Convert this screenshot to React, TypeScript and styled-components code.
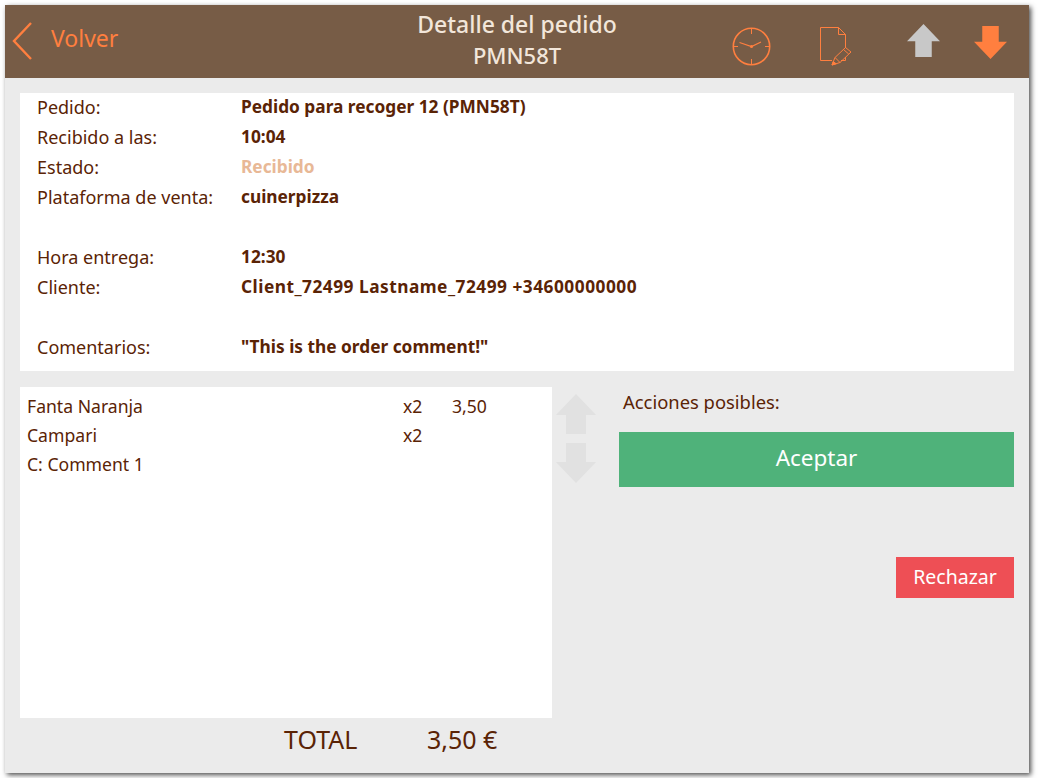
import * as React from 'react';
import styled, {createGlobalStyle} from 'styled-components';

const GlobalStyle = createGlobalStyle`
  html, body {
    margin: 0;
    padding: 0;
    background: #fff;
  }
  body {
    font-family: "Noto Sans", "Open Sans", sans-serif;
    color: #5a2305;
  }
`;

const Frame = styled.div`
  width: 1024px;
  height: 768px;
  margin: 5px;
  background: #ebebeb;
  box-shadow: 2px 2px 5px rgba(0, 0, 0, 0.7);
  display: flex;
  flex-direction: column;
`;

const Header = styled.header`
  height: 73px;
  flex: none;
  background: #775c46;
  display: grid;
  grid-template-columns: 312px 400px 312px;
  align-items: start;
`;

const BackLink = styled.div`
  display: flex;
  align-items: flex-start;
  padding: 17px 0 0 7px;
  gap: 19px;
  color: #ff7f3f;
  font-size: 23px;
  line-height: 32px;
`;

const Title = styled.div`
  padding-top: 4px;
  text-align: center;
  color: #f2e6da;
  font-size: 23px;
  font-weight: 500;
  line-height: 31px;
`;

const TitleCode = styled.div`
  font-size: 22px;
`;

const HeaderIcons = styled.div`
  display: flex;
  align-items: flex-start;
`;

const IconSlot = styled.div<{$w: number; $top: number}>`
  width: ${p => p.$w}px;
  padding-top: ${p => p.$top}px;
  display: flex;
  justify-content: center;
`;

const Content = styled.main`
  padding: 15px 15px 0;
  display: flex;
  flex-direction: column;
  gap: 16px;
`;

const InfoCard = styled.section`
  background: #fff;
  padding: 0 17px 8px;
`;

const InfoRow = styled.div`
  height: 27px;
  margin-bottom: 3px;
  display: grid;
  grid-template-columns: 204px 1fr;
  align-items: center;
  font-size: 18px;
`;

const InfoValue = styled.span<{$muted?: boolean; $wide?: boolean}>`
  font-size: 17.3px;
  font-weight: 700;
  letter-spacing: ${p => (p.$wide ? '0.5px' : '0')};
  color: ${p => (p.$muted ? '#e8b896' : '#5a2305')};
`;

const Columns = styled.div`
  display: grid;
  grid-template-columns: 532px 67px 395px;
`;

const LinesPanel = styled.div`
  height: 331px;
  background: #fff;
  padding: 4px 7px;
  box-sizing: border-box;
`;

const LineRow = styled.div`
  height: 29px;
  display: grid;
  grid-template-columns: 376px 49px 1fr;
  align-items: center;
  font-size: 17.6px;
`;

const Scroller = styled.div`
  padding: 7px 0 0 4px;
  display: flex;
  flex-direction: column;
  gap: 9px;
`;

const Actions = styled.div`
  display: flex;
  flex-direction: column;
`;

const ActionsLabel = styled.div`
  height: 29px;
  margin-bottom: 16px;
  padding-left: 4px;
  display: flex;
  align-items: center;
  font-size: 18.4px;
`;

const AcceptButton = styled.button`
  height: 55px;
  padding: 0 0 5px;
  border: 0;
  background: #4fb27a;
  color: #fff;
  font-family: inherit;
  font-size: 22.5px;
`;

const RejectButton = styled.button`
  align-self: flex-end;
  width: 118px;
  height: 41px;
  margin-top: 70px;
  padding: 0 0 3px;
  border: 0;
  background: #ee4f55;
  color: #fff;
  font-family: inherit;
  font-size: 19.5px;
`;

const TotalRow = styled.div`
  width: 532px;
  height: 41px;
  margin-top: -16px;
  display: grid;
  grid-template-columns: 264px 143px 1fr;
  align-items: center;
  font-size: 25px;
  div:first-child {
    grid-column: 2;
  }
`;

const ArrowUp = ({fill, size}: {fill: string; size: number}) => (
  <svg width={size} height={size} viewBox="0 0 40 40">
    <path d="M20 0 L40 21 H30 V40 H10 V21 H0 Z" fill={fill} />
  </svg>
);

const ArrowDown = ({fill, size}: {fill: string; size: number}) => (
  <svg width={size} height={size} viewBox="0 0 40 40">
    <path d="M20 40 L40 19 H30 V0 H10 V19 H0 Z" fill={fill} />
  </svg>
);

const Chevron = () => (
  <svg width="20" height="38" viewBox="0 0 20 38">
    <path d="M19 1 L2 19 L19 37" fill="none" stroke="#ff7f3f" strokeWidth="2.4" />
  </svg>
);

const ClockIcon = () => (
  <svg width="39" height="39" viewBox="0 0 39 39" fill="none" stroke="#ff7f3f">
    <circle cx="19.500" cy="19.500" r="18.200" strokeWidth="1.600" />
    <path d="M19.500 2v5M19.500 32v5M2 19.500h4M33 19.500h4" strokeWidth="1" />
    <path d="M7.500 15.500 L19.500 19.500 L29 15" strokeWidth="1.200" />
    <circle cx="19.500" cy="19.500" r="1.500" fill="#ff7f3f" stroke="none" />
  </svg>
);

const NoteIcon = () => (
  <svg width="32" height="39" viewBox="0 0 32 39" fill="none" stroke="#ff7f3f" strokeWidth="1">
    <path d="M25.500 21 V7.500 L18.500 0.500 H0.500 V33.500 H12" />
    <path d="M18.500 0.500 V7.500 H25.500" />
    <path d="M21 33.500 H25.500 V30" />
    <path d="M12 38 L15 30.500 L25.500 20.500 L31 25 L20 35.500 Z" />
    <path d="M15 30.500 L20 35.500 M23.500 22.500 L28.700 27" />
    <path d="M12 38 L13.200 34.500 L16.200 36.800 Z" fill="#ff7f3f" />
  </svg>
);

const infoRows: {label: string; value: string; muted?: boolean; wide?: boolean}[] = [
  {label: 'Pedido:', value: 'Pedido para recoger 12 (PMN58T)'},
  {label: 'Recibido a las:', value: '10:04'},
  {label: 'Estado:', value: 'Recibido', muted: true},
  {label: 'Plataforma de venta:', value: 'cuinerpizza'},
  {label: '', value: ''},
  {label: 'Hora entrega:', value: '12:30'},
  {label: 'Cliente:', value: 'Client_72499 Lastname_72499 +34600000000', wide: true},
  {label: '', value: ''},
  {label: 'Comentarios:', value: '"This is the order comment!"'},
];

const lines = [
  ['Fanta Naranja', 'x2', '3,50'],
  ['Campari', 'x2', ''],
  ['C: Comment 1', '', ''],
];

export default function App() {
  return (
    <>
      <GlobalStyle />
      <Frame>
        <Header>
          <BackLink>
            <Chevron />
            Volver
          </BackLink>
          <Title>
            Detalle del pedido
            <TitleCode>PMN58T</TitleCode>
          </Title>
          <HeaderIcons>
            <IconSlot $w={68} $top={22}><ClockIcon /></IconSlot>
            <IconSlot $w={101} $top={22}><NoteIcon /></IconSlot>
            <IconSlot $w={75} $top={19}><ArrowUp fill="#c8c8c8" size={33} /></IconSlot>
            <IconSlot $w={58} $top={21}><ArrowDown fill="#ff7f3f" size={33} /></IconSlot>
          </HeaderIcons>
        </Header>
        <Content>
          <InfoCard>
            {infoRows.map((row, i) => (
              <InfoRow key={i}>
                <span>{row.label}</span>
                <InfoValue $muted={row.muted} $wide={row.wide}>{row.value}</InfoValue>
              </InfoRow>
            ))}
          </InfoCard>
          <Columns>
            <LinesPanel>
              {lines.map(([name, qty, price]) => (
                <LineRow key={name}>
                  <span>{name}</span>
                  <span>{qty}</span>
                  <span>{price}</span>
                </LineRow>
              ))}
            </LinesPanel>
            <Scroller>
              <ArrowUp fill="#e1e1e1" size={40} />
              <ArrowDown fill="#e1e1e1" size={40} />
            </Scroller>
            <Actions>
              <ActionsLabel>Acciones posibles:</ActionsLabel>
              <AcceptButton>Aceptar</AcceptButton>
              <RejectButton>Rechazar</RejectButton>
            </Actions>
          </Columns>
          <TotalRow>
            <div>TOTAL</div>
            <div>3,50 €</div>
          </TotalRow>
        </Content>
      </Frame>
    </>
  );
}
